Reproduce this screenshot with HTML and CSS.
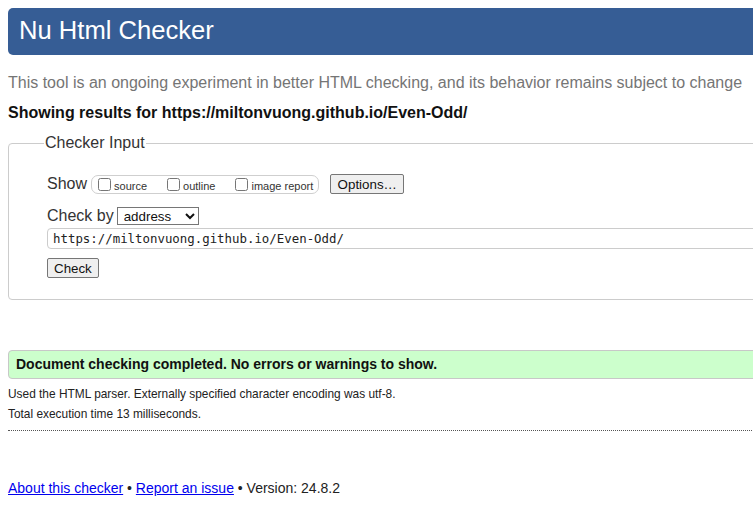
FILE: index.html
```html
<!DOCTYPE html>
<html lang="en">
<head>
<meta charset="utf-8">
<title>Nu Html Checker</title>
<link rel="stylesheet" href="styles.css">
</head>
<body>
<div class="page">
  <h1 class="title">Nu Html Checker</h1>
  <p class="intro">This tool is an ongoing experiment in better HTML checking, and its behavior remains subject to change</p>
  <p class="showing">Showing results for https://miltonvuong.github.io/Even-Odd/</p>

  <fieldset class="input-box">
    <legend class="legend">Checker Input</legend>
    <div class="row row-show">
      <span class="row-label">Show</span>
      <span class="show-group">
        <label class="opt"><input type="checkbox" class="cb"><span>source</span></label>
        <label class="opt"><input type="checkbox" class="cb"><span>outline</span></label>
        <label class="opt"><input type="checkbox" class="cb"><span>image report</span></label>
      </span>
      <button type="button" class="btn btn-options">Options…</button>
    </div>
    <div class="row row-checkby">
      <span class="row-label">Check by</span>
      <select class="sel"><option>address</option></select>
    </div>
    <input type="text" class="url" value="https://miltonvuong.github.io/Even-Odd/">
    <div class="row row-submit">
      <button type="button" class="btn">Check</button>
    </div>
  </fieldset>

  <div class="success">Document checking completed. No errors or warnings to show.</div>
  <p class="details">Used the HTML parser. Externally specified character encoding was utf-8.</p>
  <p class="details">Total execution time 13 milliseconds.</p>
  <hr class="dotted">

  <p class="footer"><a href="#">About this checker</a> • <a href="#">Report an issue</a> • Version: 24.8.2</p>
</div>
</body>
</html>
```

FILE: styles.css
```css
html, body {
  margin: 0;
  padding: 0;
  overflow: hidden;
  background: #fff;
}
body {
  font-family: "Liberation Sans", Arial, sans-serif;
  color: #222;
}
.page {
  width: 800px;
  padding: 8px;
}
.title {
  margin: 0;
  background: #365d95;
  color: #fff;
  font-weight: normal;
  font-size: 25.6px;
  line-height: 33px;
  padding: 6px 11px 8px;
  border-radius: 5px;
}
.intro {
  margin: 19px 0 0;
  font-size: 16px;
  line-height: 18px;
  color: #757575;
}
.showing {
  margin: 12px 0 0;
  font-size: 16px;
  line-height: 18px;
  font-weight: bold;
  color: #111;
}
.input-box {
  margin: 12px 0 0;
  border: 1px solid #cccccc;
  border-radius: 4px;
  padding: 10px 0 21px 38px;
  min-width: 0;
}
.legend {
  font-size: 16px;
  color: #333;
  padding: 0 1px;
  margin-left: -3px;
}
.row {
  display: flex;
  align-items: center;
}
.row-label {
  font-size: 16px;
  color: #333;
}
.row-show {
  height: 22px;
  margin-top: 11px;
}
.show-group {
  display: inline-flex;
  align-items: center;
  gap: 20px;
  margin-left: 4px;
  height: 17px;
  padding: 0 5px 0 6px;
  border: 1px solid #cfcfcf;
  border-radius: 7px;
}
.opt {
  display: inline-flex;
  align-items: center;
  gap: 3px;
  font-size: 11px;
  color: #333;
}
.opt span {
  padding-top: 3px;
}
.cb {
  width: 13px;
  height: 13px;
  margin: 0;
}
.btn {
  font-family: "Liberation Sans", Arial, sans-serif;
  font-size: 13.33px;
  height: 20px;
  padding: 0 6px;
  border: 1px solid #767676;
  border-radius: 2px;
  background: #efefef;
  color: #111;
}
.btn-options {
  margin-left: 11px;
  width: 74px;
}
.row-checkby {
  margin-top: 11px;
  height: 20px;
}
.sel {
  margin-left: 3px;
  width: 82px;
  height: 18px;
  font-family: "Liberation Sans", Arial, sans-serif;
  font-size: 13.33px;
  border: 1px solid #767676;
  border-radius: 0;
  padding: 0 0 0 2px;
  background: #fff;
  color: #111;
}
.url {
  display: block;
  box-sizing: border-box;
  margin: 2px 0 0;
  width: 760px;
  height: 21px;
  padding: 0 5px;
  border: 1px solid #cccccc;
  border-radius: 4px;
  font-family: "DejaVu Sans Mono", "Liberation Mono", monospace;
  font-size: 12.4px;
  color: #222;
}
.row-submit {
  margin-top: 9px;
}
.success {
  margin-top: 50px;
  height: 27px;
  line-height: 27px;
  padding: 0 7px;
  background: #ccffcc;
  border: 1px solid #c8c8c8;
  border-radius: 4px;
  font-size: 14px;
  font-weight: bold;
  color: #111;
}
.details {
  margin: 0;
  font-size: 11.9px;
  line-height: 20px;
  color: #222;
}
.success + .details {
  margin-top: 5px;
}
.dotted {
  margin: 6px 0 0;
  border: 0;
  border-top: 1px dotted #555;
  height: 0;
}
.footer {
  margin: 48px 0 0;
  font-size: 14px;
  line-height: 18px;
  color: #222;
}
.footer a {
  color: #0000ee;
}
```
